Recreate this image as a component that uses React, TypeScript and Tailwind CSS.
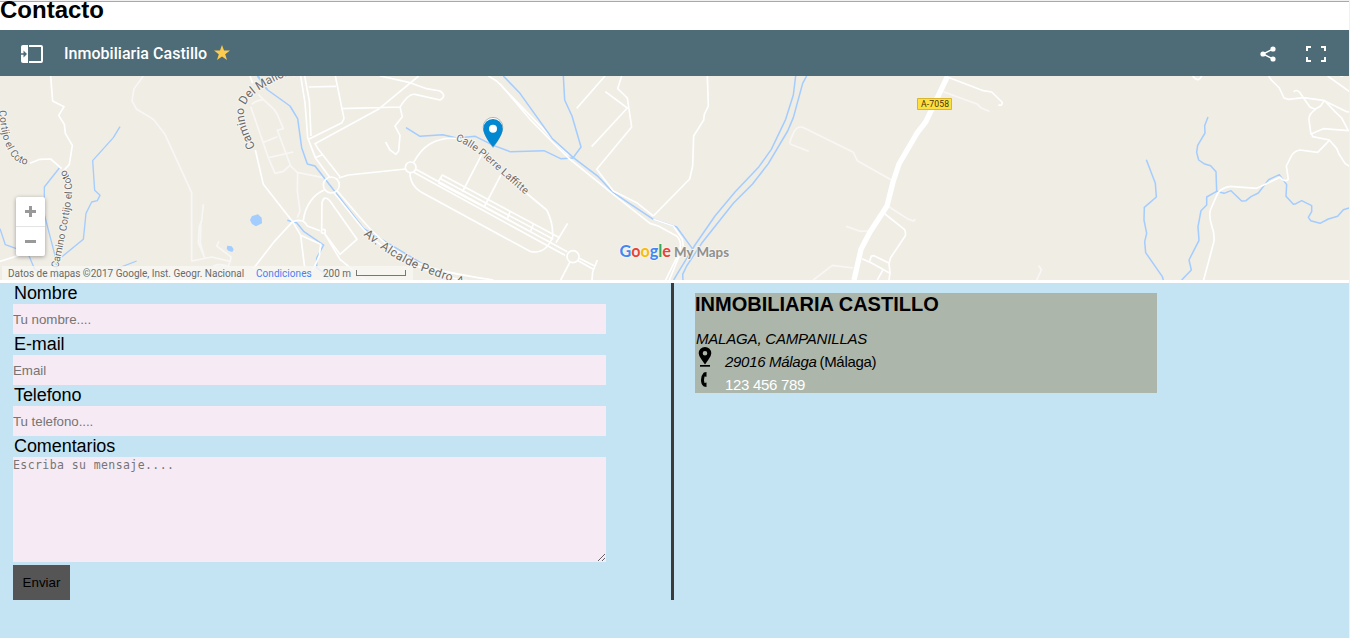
import React from "react";

const labelHalo = {
  fill: "#6b6b6b",
  stroke: "#f7f5f0",
  strokeWidth: 6,
  paintOrder: "stroke" as const,
  fontFamily: "Roboto, sans-serif",
};

function MapCanvas() {
  return (
    <svg
      className="block h-[204px] w-[1349px] bg-[#f0ede5]"
      viewBox="0 0 1349 204"
      fill="none"
      strokeLinejoin="round"
    >
      <defs>
        <path id="cortijo-west" d="M-4,104 C6,170 8,205 40,247 Q58,264 92,268" />
        <path id="cortijo-south" d="M174,578 C192,500 204,440 214,370 C220,330 215,305 191,276" />
        <path id="mallorquin" d="M766,214 C744,165 726,130 734,94 C744,58 790,28 880,-8" />
        <path id="laffitte" d="M676,194 C720,208 750,237 788,270 L900,369" />
        <path id="alcalde" d="M400,477 Q480,545 570,584 L730,640" />
      </defs>

      {/* West side */}
      <g transform="scale(.33333)">
        <g stroke="#f8f7f5" strokeWidth="5">
          <path d="M430,0 L402,38 L396,75 L410,100 L460,130 L495,175 L575,350 L575,555 L635,543 L690,556 L683,575 M610,385 L605,435 L598,450 L595,500 L614,545 M603,435 L601,500 L612,540 M657,495 L650,510 L684,536 L693,543 L690,560 M640,570 Q665,560 690,574" />
          <path d="M755,85 Q765,75 790,70 L822,100 L832,115 L850,158 L832,163 L872,270 L895,292 M752,92 L805,245 L825,292 L850,286 L870,268 M787,200 L832,182 M806,245 L880,228 M775,55 L790,70 M895,290 L970,305 M893,290 L892,345 L900,405 L892,425" />
        </g>
        <g stroke="#a3ccff" strokeWidth="4">
          <path d="M360,152 L340,185 L278,254 L284,343 L300,358 L292,374 L275,378 L258,412 L250,490 L180,547" />
          <path d="M178,276 L133,333 L133,415 L168,550 L172,612 M0,458 L16,506 L60,522 L85,535 L104,580 L168,612 M410,555 L345,580 L270,612 M660,600 L650,612 M775,0 L800,40" />
        </g>
        <path d="M750,432 L756,420 L774,415 L785,425 L786,442 L768,451 L756,444Z M680,518 L682,509 L695,511 L701,520 L697,528 L685,524Z" fill="#a3ccff" />
        <g stroke="#fff" strokeWidth="5">
          <path d="M152,0 L158,75 L192,92 L176,118 L193,145 L196,172 L217,208 L208,265 L190,285 M90,262 L120,250 L152,249 L185,278 M0,556 L60,537 M155,570 L160,612 M515,612 L555,580 M550,612 L575,585 L580,612" />
        </g>
      </g>

      {/* Central neighbourhood */}
      <g transform="translate(230) scale(.33333)">
        <g stroke="#a3ccff" strokeWidth="4.5">
          <path d="M82,0 L113,42 L180,90 L203,128 L215,215 L232,264 L255,270 L400,457 M172,433 L200,440 L222,467 L281,507 L260,546 L260,575 L280,590 L300,612" />
          <path d="M528,155 L570,181 L638,176 L680,186 L736,181 L790,208 L840,227 L942,224 L992,248 L1029,246 M400,457 L580,565" />
        </g>
        <g stroke="#fff" strokeWidth="5">
          <path d="M60,0 L68,22 M76,222 L100,325 L188,437 L130,500 L70,578 M188,437 Q220,425 232,450 L270,464 M188,437 L212,478 L224,575 M212,478 L272,505 L268,540 L245,590 M220,433 C225,390 250,355 283,342 M275,460 L276,380 Q282,355 300,375 L381,490 L330,535 L282,470 L330,550 L405,612" />
          <path d="M212,0 L225,80 L233,185 L256,245 L300,305 M224,0 L238,75 L243,180 M236,33 L318,31 M316,0 L342,127 L336,140 L236,190 M333,98 L510,93 Q535,52 555,55 L630,72 Q652,60 630,45 L590,38 L540,20 L450,0 M566,0 L445,100 L255,203 L265,220 L330,302 M255,245 L278,236 M510,93 L517,122 L495,150 L510,178 L506,225 L498,235 L480,222 L467,198" />
          <circle cx="304" cy="327" r="24" />
          <circle cx="280" cy="466" r="6" fill="#f0ede5" />
          <path d="M326,306 L355,297 L527,279 M322,345 C400,435 430,480 500,525 C580,580 650,590 790,612 M312,350 C370,420 400,470 450,505 C540,575 640,602 730,620" />
          <circle cx="542" cy="274" r="16" />
          <path d="M551,259 C575,215 610,180 690,188 M885,348 L950,402 Q970,440 968,483 C955,515 935,535 900,526 L580,352 Q540,330 540,290" />
          <path d="M556,279 L1012,527 M550,288 L1005,538 M624,318 L637,297 L990,486 M632,308 L970,490 M625,320 L966,502 M755,236 L697,348 M812,298 L764,390 M840,408 L832,428 M910,445 L902,465 M1013,442 L978,500" />
          <path d="M775,0 L800,15 L1016,238" />
        </g>
      </g>

      {/* East of the industrial estate */}
      <g transform="translate(500) scale(.33333)">
        <g stroke="#a3ccff" strokeWidth="4.5">
          <path d="M10,0 L60,52 L157,188 L220,245 L295,302 L340,350 L460,430 L530,453 L577,518 M190,0 L194,72 L216,120 L243,213 L218,247 M887,0 L880,57 L857,130 L814,220 L777,272 L705,348 L645,420 L585,507 L540,580 L521,612 M920,0 L908,22 L880,125 L863,165 L805,263 L757,325 L700,382 L605,502 L560,570 L548,595 L549,612" />
        </g>
        <g stroke="#fff" strokeWidth="5">
          <path d="M0,23 L90,130 L205,246 L340,355 L450,442 L475,450 L530,480 Q550,500 535,535 L497,612 M460,430 L520,450 L547,490 L550,510 L508,612" />
          <path d="M315,0 L230,97 M365,0 L353,38 L382,66 L395,153 L290,280 L340,345 L410,380 L460,420 M316,47 L382,96 L275,212 M622,0 L625,90 L613,115 L611,132 L581,180 L578,270 L569,309 L460,420" />
          <circle cx="219" cy="542" r="18" />
          <path d="M236,546 L284,570 M232,553 L280,580 M292,552 L278,588 L276,612 M210,558 L182,612" />
        </g>
      </g>

      {/* Regional road */}
      <g transform="translate(780) scale(.33333)">
        <g stroke="#f8f7f5" strokeWidth="5">
          <path d="M86,226 L32,205 Q26,198 38,177 Q48,148 68,154 L220,229 L232,254 L333,311 M490,47 L593,85 L602,95 L628,106 M328,393 L382,428 L400,435 L406,430 M198,451 L240,466 L263,465 M100,612 L157,568 L220,576 M776,568 L784,582 L770,612" />
        </g>
        <path d="M503,0 L437,138 L412,170 L357,264 L339,318 L321,390 L270,468 L243,520 L222,612" stroke="#fff" strokeWidth="16" />
        <path d="M508,5 L610,44 L635,48 L666,78 Q669,90 655,87 M315,414 L373,460 Q378,467 376,479 L332,545 L327,562 L330,590 L327,612 M246,548 L268,558 L274,540 L282,539 L328,562 M268,557 L330,592 M308,583 L292,612" stroke="#fff" strokeWidth="5" />
      </g>

      {/* East hills */}
      <g transform="translate(1050 -56) scale(.33333)">
        <g stroke="#a3ccff" strokeWidth="4.5">
          <path d="M289,419 L316,490 L319,531 L283,562 L282,600 L290,640 L284,665 L287,698 L337,770 L340,780 M474,291 L464,317 L465,339 L443,376 L440,397 L446,420 L462,431 L482,437 L498,455 L500,514 L470,531 L470,555 L453,572 L444,620 L447,661 L417,720 L424,750 L395,780 M500,514 L522,520 L543,512 L575,543 L588,542 L603,530 L625,519 L656,479 L688,464 L710,494 L708,529 L730,553 L738,551 L755,542 L785,557 L785,575 L775,592 L782,602 L810,610 L835,597 L863,589 L880,569 L900,563" />
        </g>
        <g stroke="#fff" strokeWidth="5">
          <path d="M428,168 Q445,190 455,168 M656,168 L664,180 L688,204 L702,234 L716,238 L760,233 L820,241 L890,275 L900,276 M731,216 Q738,206 750,218 L760,233 L780,261 L795,268 L812,258 L823,241 L855,275 L875,294 L895,332 L820,326 L785,341 L788,350 L838,360 L860,385 L867,402 L885,430 L900,440 M797,268 Q775,282 777,300 L783,344 M838,361 L803,397 L750,390 Q730,393 722,412 L709,438 L715,478 Q705,488 690,472 L620,505 L540,499 Q515,503 503,520 L481,570 Q476,590 486,620 Q494,640 492,664 L461,780 M833,168 L900,216 M870,168 L880,168" />
        </g>
      </g>

      {/* Road names */}
      <g transform="scale(.33333)" {...labelHalo} fontSize="31">
        <text><textPath href="#cortijo-west">Cortijo el Coto</textPath></text>
        <text><textPath href="#cortijo-south" textLength="307">Camino Cortijo el Coto</textPath></text>
        <text fontSize="36"><textPath href="#mallorquin">Camino Del Mallorquín</textPath></text>
      </g>
      <g transform="translate(230) scale(.33333)" {...labelHalo} fontSize="32">
        <text fontSize="31"><textPath href="#laffitte" textLength="266">Calle Pierre Laffitte</textPath></text>
        <text fontSize="36" letterSpacing="1.4"><textPath href="#alcalde">Av. Alcalde Pedro Aparicio</textPath></text>
      </g>
      <rect x="917.5" y="22.5" width="34" height="11" fill="#ffdf3d" stroke="#d9b62d" />
      <text x="935" y="31.3" textAnchor="middle" fill="#3f3510" fontSize="8.6" fontFamily="Roboto, sans-serif" textLength="28">A-7058</text>

      {/* Marker */}
      <path d="M493,41.4 a9.8,9.8 0 0 0 -9.8,9.8 C483.200,58.500 493,71.500 493,71.500 S502.800,58.500 502.800,51.200 A9.800,9.800 0 0 0 493,41.400Z" fill="#fff" stroke="#8c8c8c" strokeWidth=".6" />
      <path d="M493,43 a9.7,9.7 0 0 0 -9.700,9.700 C483.300,60 493,71 493,71 S502.700,60 502.700,52.700 A9.700,9.700 0 0 0 493,43Z" fill="#0288d1" />
      <circle cx="493" cy="52.800" r="4" fill="#fff" />

      {/* Brand */}
      <g fontFamily="Lato, sans-serif" fontSize="17" stroke="#f5f3ee" strokeWidth="2" paintOrder="stroke">
        <text x="619.500" y="180.500" fontWeight="700" textLength="51.500" lengthAdjust="spacingAndGlyphs">
          <tspan fill="#4285f4">G</tspan><tspan fill="#ea4335">o</tspan><tspan fill="#fbbc05">o</tspan><tspan fill="#4285f4">g</tspan><tspan fill="#34a853">l</tspan><tspan fill="#ea4335">e</tspan>
        </text>
        <text x="674" y="180.500" fontSize="14" fontWeight="700" fill="#8f8f8f" textLength="55" lengthAdjust="spacingAndGlyphs">My Maps</text>
      </g>
    </svg>
  );
}

function Field({ label, placeholder }: { label: string; placeholder: string }) {
  return (
    <label className="block">
      <span className="block h-[21px] pl-px text-[18px] leading-[20px] tracking-[-0.08px]">{label}</span>
      <input
        className="block h-[30px] w-full bg-[#f6ebf5] text-[13.33px] tracking-[-0.05px] outline-none placeholder:text-[#757575]"
        placeholder={placeholder}
      />
    </label>
  );
}

export default function App() {
  return (
    <div className="h-[638px] w-[1350px] overflow-hidden border-r border-[#f1f1f1] bg-white font-['Liberation_Sans',Arial,sans-serif] text-black">
      <div className="h-0.5 border-b border-[#a9a9a9] bg-[#f1f1f1]" />
      <h1 className="-mt-[6px] h-[34px] text-[24px] leading-[28px] font-bold">Contacto</h1>

      <section className="relative mb-[3px] h-[250px]">
        <header className="flex h-[46px] items-center bg-[#4e6b78] pr-[23px] pl-[21px] font-[Roboto,sans-serif] text-white">
          <svg width="22" height="18" viewBox="0 0 22 18" className="mt-0.5">
            <path d="M2 0H7V18H2Q0 18 0 16V2Q0 0 2 0Z" fill="#fff" />
            <path d="M0 8.200H2.500V5.500L6 9L2.500 12.500V9.800H0Z" fill="#4e6b78" />
            <path d="M8 1H20Q21 1 21 2V16Q21 17 20 17H8" fill="none" stroke="#fff" strokeWidth="2" />
          </svg>
          <h2 className="mt-[2px] ml-[21px] w-[143px] text-[16px] font-medium tracking-[0.03px] whitespace-nowrap">Inmobiliaria Castillo</h2>
          <svg width="16" height="16" viewBox="0 0 16 16" className="ml-[7px]">
            <path d="M8 0L10 5.600H16L11.200 9.200L13 15L8 11.600L3 15L4.800 9.200L0 5.600H6Z" fill="#fdcb4d" />
          </svg>
          <svg width="16" height="16" viewBox="0 0 16 16" className="mt-px ml-auto" fill="#fff">
            <path d="M13 3L3 8L13 13" fill="none" stroke="#fff" strokeWidth="1.500" />
            <circle cx="13" cy="3" r="2.600" /><circle cx="3" cy="8" r="2.600" /><circle cx="13" cy="13" r="2.600" />
          </svg>
          <svg width="20" height="16" viewBox="0 0 20 16" className="mt-px ml-[30px]" fill="none" stroke="#fff" strokeWidth="2">
            <path d="M1 5V1H5M15 1H19V5M19 11V15H15M5 15H1V11" />
          </svg>
        </header>
        <MapCanvas />

        <div className="absolute top-[167px] left-[16px] h-[59px] w-[29px] rounded-[2px] bg-white shadow-[0_1px_4px_rgba(0,0,0,0.35)]">
          <svg width="29" height="59" viewBox="0 0 29 59">
            <path d="M9 14.500H20M14.500 9V20M9 44.500H20" stroke="#999" strokeWidth="3" />
            <path d="M0 29.500H29" stroke="#e3e3e3" />
          </svg>
        </div>
        <div className="absolute bottom-0 left-[2px] flex h-[14px] w-[411px] items-center bg-[#f8f6f2]/80 pl-[6px] font-[Roboto,sans-serif] text-[10px] whitespace-nowrap text-[#6a6a6a]">
          <span className="w-[248px]">Datos de mapas ©2017 Google, Inst. Geogr. Nacional</span>
          <span className="w-[67px] tracking-[0.05px] text-[#4a7ff0]">Condiciones</span>
          <span className="w-[33px]">200 m</span>
          <span className="h-[6px] w-[50px] border-x border-b border-[#777]" />
        </div>
      </section>

      <main className="flex h-[355px] bg-[#c5e4f3]">
        <form className="w-[671px] pl-[13px]">
          <div className="w-[593px]">
            <Field label="Nombre" placeholder="Tu nombre...." />
            <Field label="E-mail" placeholder="Email" />
            <Field label="Telefono" placeholder="Tu telefono...." />
            <label className="block">
              <span className="block h-[21px] pl-px text-[18px] leading-[20px] tracking-[-0.08px]">Comentarios</span>
              <textarea
                className="block h-[105px] w-full resize bg-[#f6ebf5] pt-px font-['DejaVu_Sans_Mono',monospace] text-[11.500px] leading-[15px] tracking-[0.41px] outline-none placeholder:text-[#757575]"
                placeholder="Escriba su mensaje...."
              />
            </label>
            <button type="button" className="mt-[3px] block h-[35px] w-[57px] bg-[#555] text-[13.33px]">Enviar</button>
          </div>
        </form>
        <div className="h-[317px] w-[3px] bg-[#3b3b3d]" />
        <aside className="mt-[10px] ml-[21px] h-[100px] w-[462px] bg-[#adb6ab] text-[15px]">
          <h2 className="h-[37px] text-[20px] leading-[22px] font-bold">INMOBILIARIA CASTILLO</h2>
          <p className="h-[17px] pl-px leading-[18px] tracking-[-0.19px] italic">MALAGA, CAMPANILLAS</p>
          <div className="flex h-[23px]">
            <svg width="14" height="22" viewBox="0 0 14 22" className="ml-[3px]">
              <path fillRule="evenodd" d="M7 0A6.300 6.300 0 0 0 .7 6.300Q.7 9 3.500 12.500L7 17.500L10.500 12.500Q13.300 9 13.300 6.300A6.300 6.300 0 0 0 7 0M7 4A2.300 2.300 0 1 1 7 8.600A2.300 2.300 0 0 1 7 4" />
              <path d="M2 18H12V19.700H2Z" />
            </svg>
            <p className="ml-[13px] leading-[30px] tracking-[-0.3px]"><i>29016 Málaga</i><span className="ml-[3px]">(Málaga)</span></p>
          </div>
          <div className="flex h-[23px]">
            <svg width="14" height="20" viewBox="0 0 14 20" className="ml-[3px]">
              <path d="M8.500 2L5.800 2.500Q3 5.500 3 10T5.800 16.500L8.500 17V12.500L6.500 13Q5.500 10 6.500 6.500L8.500 6.800Z" />
            </svg>
            <p className="ml-[13px] leading-[30px] tracking-[-0.3px] text-white">123 456 789</p>
          </div>
        </aside>
      </main>
    </div>
  );
}
